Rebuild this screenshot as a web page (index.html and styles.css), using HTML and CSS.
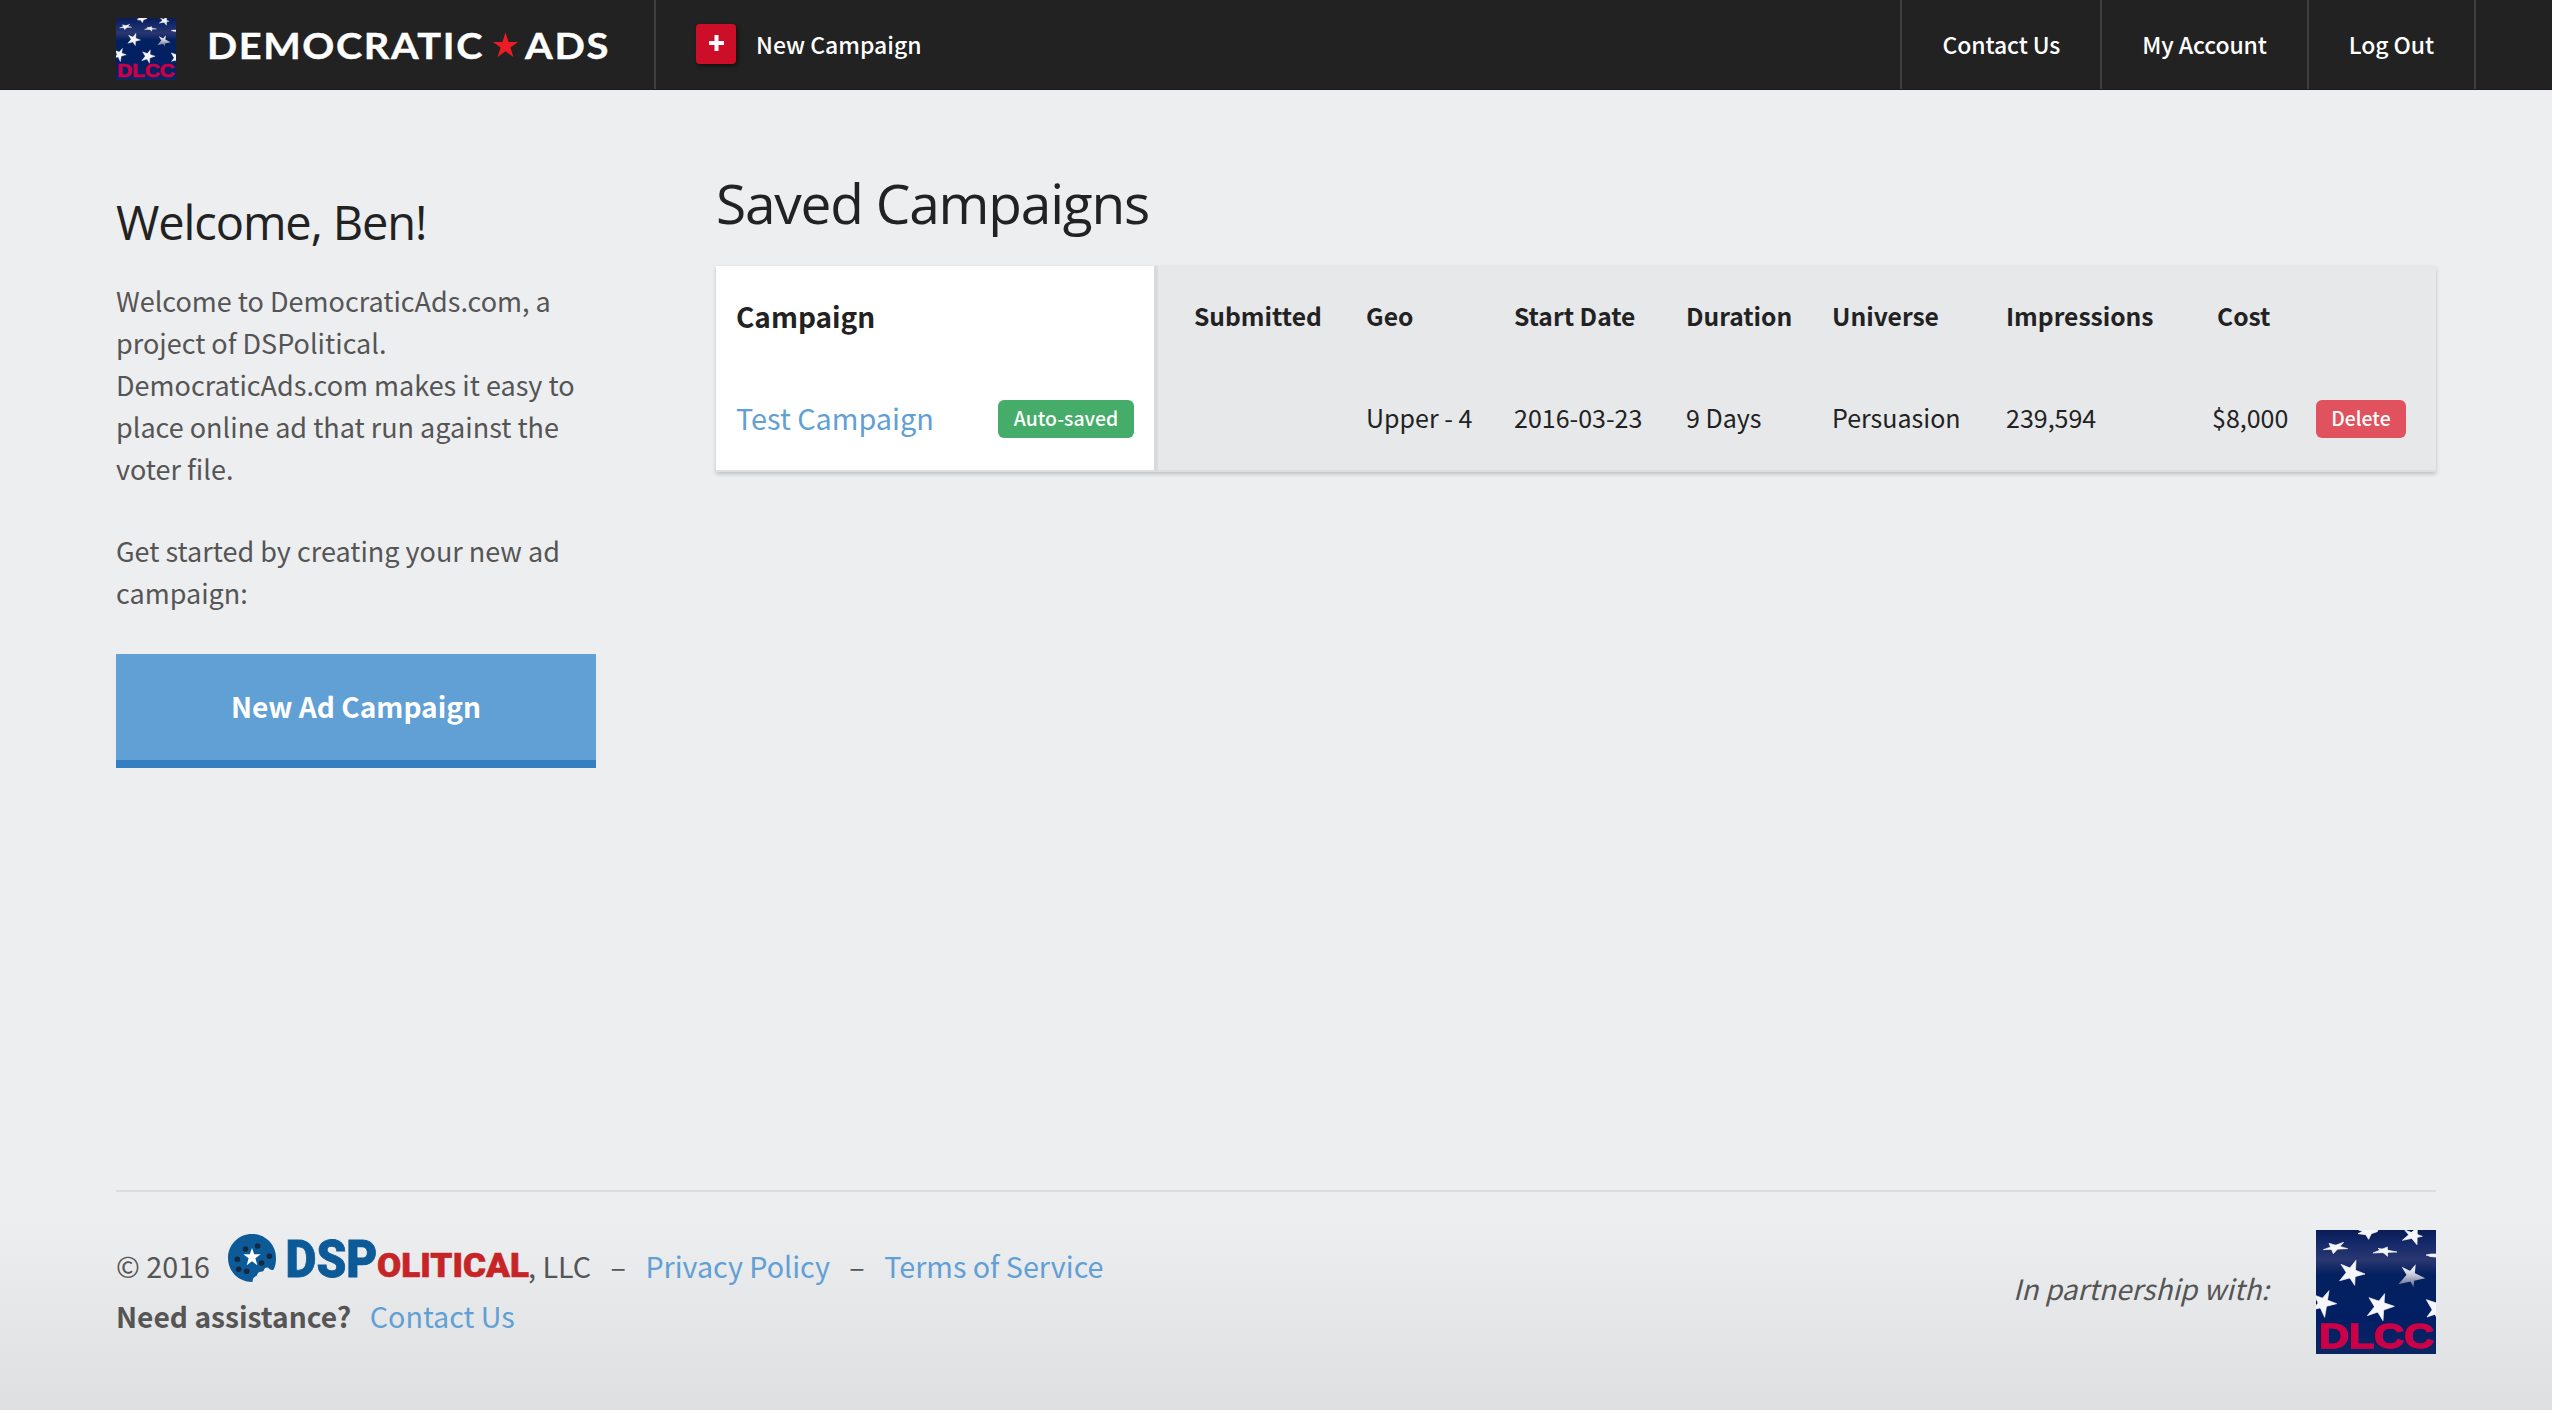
FILE: index.html
```html
<!DOCTYPE html>
<html lang="en">
<head>
<meta charset="utf-8">
<title>Democratic Ads - Saved Campaigns</title>
<link rel="stylesheet" href="styles.css">
</head>
<body>
<svg class="sprite" width="0" height="0" aria-hidden="true">
  <defs>
    <linearGradient id="flag-sheen" x1="0" y1="0" x2="0" y2="1">
      <stop offset="0" stop-color="#091c55"/>
      <stop offset=".1" stop-color="#14286a"/>
      <stop offset=".24" stop-color="#2a3770"/>
      <stop offset=".36" stop-color="#03205f"/>
      <stop offset=".7" stop-color="#021f64"/>
      <stop offset="1" stop-color="#0c2563"/>
    </linearGradient>
    <linearGradient id="star-shade" x1="0" y1="0" x2="0" y2="1">
      <stop offset="0" stop-color="#fff"/>
      <stop offset=".45" stop-color="#c9cbd8"/>
      <stop offset="1" stop-color="#535c8a"/>
    </linearGradient>
    <symbol id="flag" viewBox="0 0 360 372" preserveAspectRatio="none">
      <rect width="360" height="372" fill="url(#flag-sheen)"/>
      <g fill="#f6f7fb" stroke="#f6f7fb" stroke-width="2">
        <polygon points="128,0 186,0 184,5 166,11 158,28 149,14 126,11 140,4"/>
        <polygon points="266,0 319,19 259,31 304,-8 303,44"/>
        <polygon points="39,40 95,56 22,59 83,37 52,71"/>
        <polygon points="186,55 243,66 171,69 214,51 215,79"/>
        <polygon points="330,75 345,72 360,72 360,81 345,80"/>
        <polygon points="75,103 147,132 71,152 120,91 116,166"/>
        <polygon points="-5,195 62,221 -12,240 39,182 26,262"/>
        <polygon points="159,203 235,229 154,257 206,191 201,272"/>
        <polygon points="331,209 410,235 333,261 377,200 375,285"/>
      </g>
      <polygon fill="url(#star-shade)" points="257,110 328,145 247,163 299,103 293,172"/>
      <text x="8" y="354" class="flag-text" textLength="345" lengthAdjust="spacingAndGlyphs">DLCC</text>
    </symbol>
  </defs>
</svg>

<header class="topbar">
  <a class="brand">
    <svg class="brand-flag"><use href="#flag"/></svg>
    <svg class="wordmark" width="400" height="40" viewBox="0 0 400 40">
      <text class="wordmark-text" x="-2" y="34" textLength="277" lengthAdjust="spacingAndGlyphs">DEMOCRATIC</text>
      <polygon fill="#ed1c24" points="296.5,7.5 299.6,17 309,17 301.4,22.400 304.4,32 296.5,26.200 288.6,32 291.6,22.400 284,17 293.4,17"/>
      <text class="wordmark-text" x="316" y="34" textLength="85" lengthAdjust="spacingAndGlyphs">ADS</text>
    </svg>
  </a>
  <a class="new-link">
    <span class="plus"><svg width="15" height="16" viewBox="0 0 15 16"><path d="M7.500 0v16M0 8h15" stroke="#fff" stroke-width="4"/></svg></span>
    <span>New Campaign</span>
  </a>
  <nav class="nav">
    <a>Contact Us</a>
    <a>My Account</a>
    <a>Log Out</a>
  </nav>
</header>

<main class="main">
  <aside class="sidebar">
    <h2>Welcome, Ben!</h2>
    <p>Welcome to DemocraticAds.com, a<br>project of DSPolitical.<br>DemocraticAds.com makes it easy to<br>place online ad that run against the<br>voter file.</p>
    <p>Get started by creating your new ad<br>campaign:</p>
    <a class="cta">New Ad Campaign</a>
  </aside>
  <section class="content">
    <h1>Saved Campaigns</h1>
    <div class="card">
      <div class="names">
        <div class="names-head">Campaign</div>
        <div class="name-row">
          <a class="campaign">Test Campaign</a>
          <span class="badge saved">Auto-saved</span>
        </div>
      </div>
      <div class="grid">
        <div class="th">Submitted</div>
        <div class="th">Geo</div>
        <div class="th">Start Date</div>
        <div class="th">Duration</div>
        <div class="th">Universe</div>
        <div class="th">Impressions</div>
        <div class="th cost-head">Cost</div>
        <div class="th"></div>
        <div class="td"></div>
        <div class="td">Upper - 4</div>
        <div class="td">2016-03-23</div>
        <div class="td">9 Days</div>
        <div class="td">Persuasion</div>
        <div class="td">239,594</div>
        <div class="td">$8,000</div>
        <a class="badge delete">Delete</a>
      </div>
    </div>
  </section>
</main>

<footer class="footer">
  <div class="legal">
    <div class="legal-row">
      <span>© 2016</span>
      <svg class="dsp" width="300" height="48" viewBox="0 0 300 48">
        <path fill="#0d5a98" d="M24.600 48C10.500 48 0 37.500 0 24S10.700 0 24 0s24 10.500 24 24c0 4-.6 8-2.200 11.200-1.300 1.500-3.600.8-4.800-.6-1.200-1.800-4.200-1-5 1.200-.5 1.600-1.300 2-3.300 1.900-2.400 0-3.200 1.600-4.100 4.300-2.500.4-4.200 2.700-4 6z"/>
        <g fill="#14283f">
          <circle cx="17.500" cy="15" r="2.800"/><circle cx="29.600" cy="12" r="2.800"/><circle cx="9.300" cy="25.300" r="2.800"/><circle cx="41.400" cy="22.300" r="2.800"/><circle cx="33.600" cy="29" r="2.800"/><circle cx="10.700" cy="35.200" r="2.800"/><circle cx="18.600" cy="37.300" r="2.800"/>
        </g>
        <polygon fill="#fff" points="24,14 26.200,20.300 32.700,20.300 27.400,24.300 29.300,31.300 24,27.200 18.700,31.300 20.600,24.300 15.300,20.300 21.800,20.300"/>
        <text class="dsp-big" x="57.500" y="43" textLength="92" lengthAdjust="spacingAndGlyphs">DSP</text>
        <text class="dsp-small" x="149" y="43" textLength="152" lengthAdjust="spacingAndGlyphs">OLITICAL</text>
      </svg>
      <span>, LLC</span>
      <span class="dash">–</span>
      <a>Privacy Policy</a>
      <span class="dash">–</span>
      <a>Terms of Service</a>
    </div>
    <div class="help-row"><strong>Need assistance?</strong><a>Contact Us</a></div>
  </div>
  <div class="partner">
    <em>In partnership with:</em>
    <svg class="partner-flag"><use href="#flag"/></svg>
  </div>
</footer>
</body>
</html>
```
FILE: styles.css
```css
* { box-sizing: border-box; }

body {
  margin: 0;
  min-height: 1410px;
  display: flex;
  flex-direction: column;
  background: linear-gradient(#edeef0, #dedfe1) bottom / 100% 190px no-repeat #edeef0;
  color: #555;
  font-family: "Noto Sans CJK SC", "Noto Sans", sans-serif;
  font-size: 27px;
  line-height: 42px;
  white-space: nowrap;
}

h1, h2, p { margin: 0; }

.sprite { position: absolute; }

.flag-text {
  font: bold 106px "Liberation Sans", Arial, sans-serif;
  fill: #cc0047;
  stroke: #cc0047;
  stroke-width: 4;
}

/* Top bar */
.topbar {
  display: flex;
  height: 90px;
  padding: 0 76px 0 116px;
  background: #222;
  border-bottom: 1px solid #1c181b;
  color: #fff;
  font-size: 23px;
  font-weight: 500;
  line-height: 88px;
}

.brand {
  display: flex;
  align-items: flex-start;
  width: 540px;
  border-right: 2px solid #3f3f3f;
}

.brand-flag { width: 60px; height: 62px; margin-top: 18px; }
.wordmark { margin: 25px 0 0 33px; overflow: visible; }

.wordmark-text {
  font: bold 37px Lato, sans-serif;
  letter-spacing: 1.5px;
  fill: #fff;
  stroke: #fff;
  stroke-width: .4;
}

.new-link { display: flex; padding-left: 40px; }

.plus {
  display: flex;
  align-items: flex-start;
  justify-content: center;
  width: 40px;
  height: 40px;
  margin: 24px 20px 0 0;
  padding-top: 11px;
  border-radius: 4px;
  background: #cc0e28;
  box-shadow: 2px 2px 4px rgba(0, 0, 0, .5);
}

.nav { display: flex; margin-left: auto; }

.nav a {
  padding: 0 40px;
  border-right: 2px solid #3f3f3f;
  letter-spacing: -.1px;
}

.nav a:first-child { border-left: 2px solid #3f3f3f; }

/* Main columns */
.main {
  display: flex;
  gap: 120px;
  padding: 77px 116px 0;
}

.sidebar { width: 480px; padding-top: 23px; }

h1, h2 {
  color: #222;
  font-family: "Open Sans", sans-serif;
  font-weight: 400;
}

h2 {
  margin-bottom: 26px;
  font-size: 47px;
  line-height: 64px;
  letter-spacing: -1.1px;
}

.sidebar p + p { margin-top: 40px; }

.cta {
  display: block;
  height: 114px;
  margin-top: 40px;
  border-bottom: 8px solid #337fc2;
  background: #61a0d5;
  color: #fff;
  font-size: 28.1px;
  font-weight: 700;
  line-height: 104px;
  text-align: center;
}

.content { flex: 1; }

h1 {
  margin-bottom: 27px;
  font-size: 55px;
  line-height: 72px;
  letter-spacing: -1.2px;
}

/* Campaign card */
.card {
  display: flex;
  height: 206px;
  border-bottom: 2px solid #dddee0;
  background: #e7e8ea;
  box-shadow: 0 2px 4px rgba(0, 0, 0, .2);
  color: #222;
}

.names {
  width: 442px;
  padding: 0 20px;
  border-right: 4px solid #d8dadc;
  background: #fff;
}

.names-head {
  height: 100px;
  font-size: 28px;
  font-weight: 700;
  line-height: 100px;
}

.name-row {
  display: flex;
  justify-content: space-between;
}

.campaign {
  color: #61a0d5;
  font-size: 28.8px;
  line-height: 103px;
}

.badge {
  height: 38px;
  margin-top: 34px;
  border-radius: 6px;
  color: #fff;
  font-size: 19.4px;
  font-weight: 500;
  line-height: 36px;
  text-align: center;
}

.saved { width: 136px; background: #45ac69; }
.delete { width: 90px; background: #e0525e; }

.grid {
  display: grid;
  grid-template-columns: 172px 148px 172px 146px 174px 206px 104px 90px;
  grid-template-rows: 100px 104px;
  padding-left: 36px;
}

.th {
  font-size: 24.6px;
  font-weight: 700;
  line-height: 98px;
}

.td {
  font-size: 25px;
  line-height: 102px;
}

.cost-head { padding-left: 5px; }

/* Footer */
.footer {
  display: flex;
  justify-content: space-between;
  height: 220px;
  margin: auto 116px 0;
  border-top: 2px solid #dbdcde;
  font-size: 28.7px;
}

.footer a { color: #61a0d5; }

.legal { padding-top: 42px; }

.legal-row {
  display: flex;
  height: 63px;
  line-height: 63px;
}

.dsp { margin-left: 18px; overflow: visible; }
.dash { margin: 0 19.5px; }

.dsp-big {
  font: 900 52px Roboto, sans-serif;
  fill: #0d5a98;
  stroke: #0d5a98;
  stroke-width: .8;
}

.dsp-small {
  font: 900 34px Roboto, sans-serif;
  fill: #c62427;
  stroke: #c62427;
  stroke-width: .6;
}

.help-row { line-height: 37px; }

.help-row strong {
  margin-right: 18.5px;
  font-size: 28.2px;
}

.partner {
  display: flex;
  gap: 47px;
  padding-top: 38px;
}

.partner em {
  font-size: 28px;
  line-height: 116px;
}

.partner-flag { width: 120px; height: 124px; }
```
